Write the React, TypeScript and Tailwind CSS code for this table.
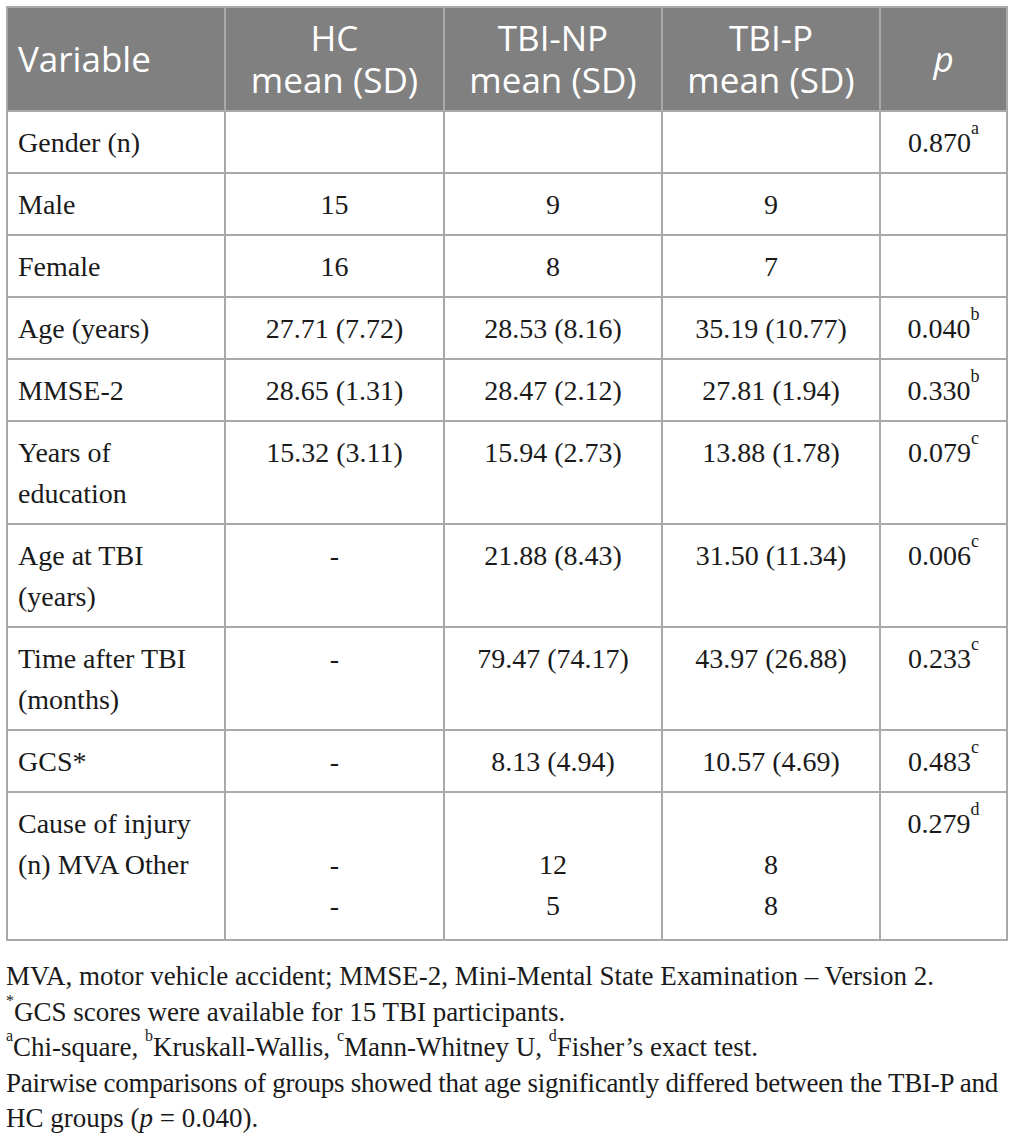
import React from "react";

type Row = {
  label: React.ReactNode;
  hc: React.ReactNode;
  np: React.ReactNode;
  p: React.ReactNode;
  pv: string;
  sup: string;
};

const rows: Row[] = [
  { label: "Gender (n)", hc: "", np: "", p: "", pv: "0.870", sup: "a" },
  { label: "Male", hc: "15", np: "9", p: "9", pv: "", sup: "" },
  { label: "Female", hc: "16", np: "8", p: "7", pv: "", sup: "" },
  { label: "Age (years)", hc: "27.71 (7.72)", np: "28.53 (8.16)", p: "35.19 (10.77)", pv: "0.040", sup: "b" },
  { label: "MMSE-2", hc: "28.65 (1.31)", np: "28.47 (2.12)", p: "27.81 (1.94)", pv: "0.330", sup: "b" },
  { label: "Years of education", hc: "15.32 (3.11)", np: "15.94 (2.73)", p: "13.88 (1.78)", pv: "0.079", sup: "c" },
  { label: "Age at TBI (years)", hc: "-", np: "21.88 (8.43)", p: "31.50 (11.34)", pv: "0.006", sup: "c" },
  { label: "Time after TBI (months)", hc: "-", np: "79.47 (74.17)", p: "43.97 (26.88)", pv: "0.233", sup: "c" },
  { label: "GCS*", hc: "-", np: "8.13 (4.94)", p: "10.57 (4.69)", pv: "0.483", sup: "c" },
  {
    label: "Cause of injury (n) MVA Other",
    hc: (<><br />-<br />-</>),
    np: (<><br />12<br />5</>),
    p: (<><br />8<br />8</>),
    pv: "0.279",
    sup: "d",
  },
];

const th = "border-2 border-[#a9a9a9] px-[10px] py-[9px] font-normal align-middle";
const td = "border-2 border-[#a9a9a9] px-[10px] pt-[10px] align-top";
const fsup = "text-[16px] leading-none align-[7px]";

export default function App() {
  return (
    <div className="bg-white w-[1013px] h-[1143px] pt-[6px] pl-[6px] text-[#1a1a1a]">
      <table className="table-fixed border-collapse w-[1000px]">
        <colgroup>
          <col className="w-[218px]" />
          <col className="w-[219px]" />
          <col className="w-[218px]" />
          <col className="w-[218px]" />
          <col className="w-[127px]" />
        </colgroup>
        <thead>
          <tr className="bg-[#808080] text-white text-[35px] leading-[42px] font-['Open_Sans',sans-serif]">
            <th className={`${th} text-left`}>Variable</th>
            <th className={`${th} text-center`}>HC<br />mean (SD)</th>
            <th className={`${th} text-center`}>TBI-NP<br />mean (SD)</th>
            <th className={`${th} text-center`}>TBI-P<br />mean (SD)</th>
            <th className={`${th} text-center italic`}>p</th>
          </tr>
        </thead>
        <tbody className="font-['Liberation_Serif',serif] text-[28px] leading-[41px]">
          {rows.map((r, i) => {
            const pad = i === rows.length - 1 ? "pb-[13px]" : "pb-[9px]";
            return (
              <tr key={i}>
                <td className={`${td} ${pad} text-left`}>{r.label}</td>
                <td className={`${td} ${pad} text-center`}>{r.hc}</td>
                <td className={`${td} ${pad} text-center`}>{r.np}</td>
                <td className={`${td} ${pad} text-center`}>{r.p}</td>
                <td className={`${td} ${pad} text-center`}>
                  {r.pv}
                  {r.sup && <sup className="text-[18px] leading-none align-[9px]">{r.sup}</sup>}
                </td>
              </tr>
            );
          })}
        </tbody>
      </table>

      {/* Footnotes */}
      <div className="mt-[18px] font-['Liberation_Serif',serif] text-[27px] leading-[35.5px] whitespace-nowrap">
        <p>MVA, motor vehicle accident; MMSE-2, Mini-Mental State Examination – Version 2.</p>
        <p>
          <sup className={fsup}>*</sup>GCS scores were available for 15 TBI participants.
        </p>
        <p>
          <sup className={fsup}>a</sup>Chi-square, <sup className={fsup}>b</sup>Kruskall-Wallis,{" "}
          <sup className={fsup}>c</sup>Mann-Whitney U, <sup className={fsup}>d</sup>Fisher’s exact test.
        </p>
        <p className="tracking-[-0.25px]">
          Pairwise comparisons of groups showed that age significantly differed between the TBI-P and
        </p>
        <p>
          HC groups (<i>p</i> = 0.040).
        </p>
      </div>
    </div>
  );
}
